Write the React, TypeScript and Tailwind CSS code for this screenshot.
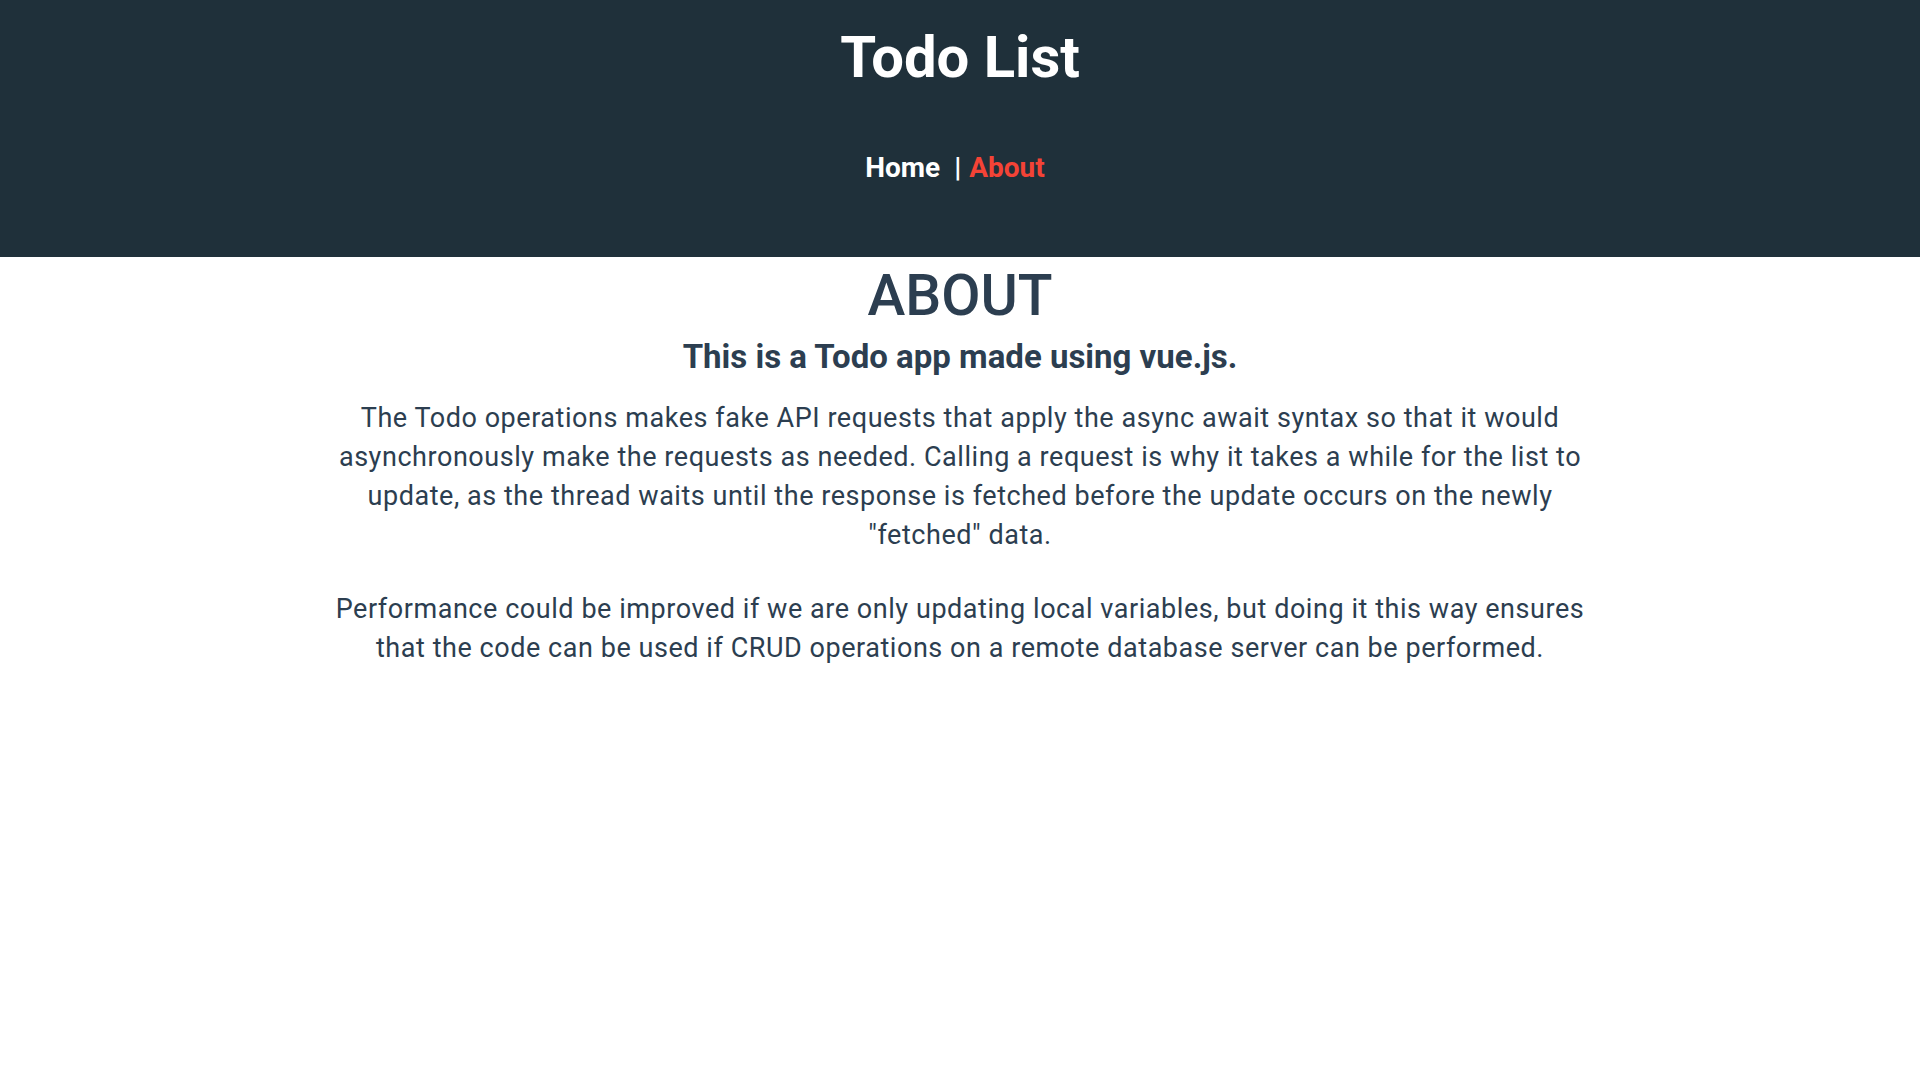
import React from 'react';

const Header: React.FC = () => (
  <header className="bg-[#1f303a] text-white text-center pt-[23px] pb-[73px]">
    <h1 className="text-[58px] font-bold leading-[68px]">Todo List</h1>
    <nav className="mt-[60px] text-[28px] font-bold leading-[33px]">
      <a href="#" className="text-white">Home</a>
      <span className="ml-[14px] mr-[8px]">|</span>
      <a href="#" className="mr-[10px] text-[#f44336]">About</a>
    </nav>
  </header>
);

export default function App() {
  return (
    <div className="min-h-screen bg-white font-['Roboto',sans-serif] text-[#2c3e50]">
      <Header />
      <main className="mx-auto w-[1270px] text-center pt-[5px]">
        <h1 className="text-[57px] font-medium leading-[67px]">ABOUT</h1>
        <h3 className="mt-[9px] text-[33px] font-bold leading-[38px]">This is a Todo app made using vue.js.</h3>
        <div className="text-[27px] leading-[39px] tracking-[0.55px]">
          <p className="mt-[23px]">
            The Todo operations makes fake API requests that apply the async await syntax so that it would
            asynchronously make the requests as needed. Calling a request is why it takes a while for the list to
            update, as the thread waits until the response is fetched before the update occurs on the newly
            "fetched" data.
          </p>
          <p className="mt-[35px]">
            Performance could be improved if we are only updating local variables, but doing it this way ensures
            that the code can be used if CRUD operations on a remote database server can be performed.
          </p>
        </div>
      </main>
    </div>
  );
}
